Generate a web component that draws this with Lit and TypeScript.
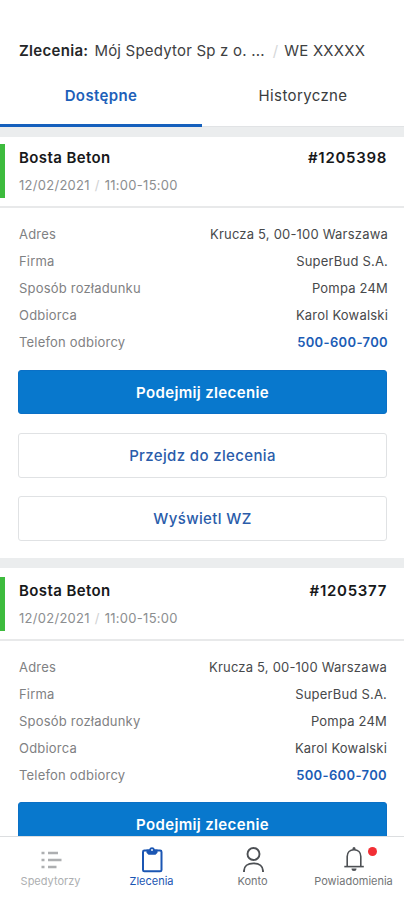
import { LitElement, html, css, svg } from "lit";
import { customElement, property } from "lit/decorators.js";

interface Order {
  company: string;
  code: string;
  rows: [string, string][];
  phone: string;
  secondary: string[];
}

const orders: Order[] = [
  {
    company: "Bosta Beton",
    code: "#1205398",
    rows: [
      ["Adres", "Krucza 5, 00-100 Warszawa"],
      ["Firma", "SuperBud S.A."],
      ["Sposób rozładunku", "Pompa 24M"],
      ["Odbiorca", "Karol Kowalski"],
    ],
    phone: "500-600-700",
    secondary: ["Przejdz do zlecenia", "Wyświetl WZ"],
  },
  {
    company: "Bosta Beton",
    code: "#1205377",
    rows: [
      ["Adres", "Krucza 5, 00-100 Warszawa"],
      ["Firma", "SuperBud S.A."],
      ["Sposób rozładunky", "Pompa 24M"],
      ["Odbiorca", "Karol Kowalski"],
    ],
    phone: "500-600-700",
    secondary: [],
  },
];

@customElement("order-card")
export class OrderCard extends LitElement {
  @property({ attribute: false }) order!: Order;

  static styles = css`
    :host { display: block; background: #fff; }
    .head {
      display: flex;
      justify-content: space-between;
      height: 54px;
      padding: 0 17px 0 14px;
      border-left: 5px solid #3dbb3d;
      box-sizing: border-box;
      margin-bottom: 8px;
    }
    .company, .code { font-size: 15px; line-height: 20px; font-weight: 600; color: #17181a; margin-top: 4px; letter-spacing: 0.4px; }
    .code { letter-spacing: 0.7px; }
    .date { font-size: 13px; line-height: 18px; margin-top: 8px; color: #8c8e90; letter-spacing: 0.28px; }
    .slash { color: #cfd1d3; margin: 0 1px; }
    .details { border-top: 2px solid #e8e9ea; padding: 13px var(--value-inset, 16px) 0 19px; }
    .row { display: flex; justify-content: space-between; height: 27px; line-height: 27px; font-size: 13px; letter-spacing: 0.2px; }
    .label { color: #7f8183; }
    .value { color: #47494b; }
    .phone { color: #1b5cb5; font-weight: 600; letter-spacing: 0.35px; }
    .actions { display: flex; flex-direction: column; gap: 18px; padding: var(--actions-top, 14px) 17px 17px 18px; }
    .btn {
      height: 45px;
      box-sizing: border-box;
      border-radius: 3px;
      border: 1px solid #e0e2e4;
      background: #fff;
      color: #2a5caa;
      font: 500 15px/43px Inter, sans-serif;
      letter-spacing: 0.36px;
      padding: 0;
      text-align: center;
    }
    .primary { height: 44px; margin-bottom: 1px; background: #0878cd; border-color: #0a70c6; color: #fff; font-weight: 600; letter-spacing: 0.35px; }
  `;

  render() {
    const o = this.order;
    return html`
      <div class="head">
        <div>
          <div class="company">${o.company}</div>
          <div class="date">12/02/2021 <span class="slash">/</span> 11:00-15:00</div>
        </div>
        <div class="code">${o.code}</div>
      </div>
      <div class="details">
        ${o.rows.map(([l, v]) => html`<div class="row"><span class="label">${l}</span><span class="value">${v}</span></div>`)}
        <div class="row"><span class="label">Telefon odbiorcy</span><span class="phone">${o.phone}</span></div>
      </div>
      <div class="actions">
        <button class="btn primary">Podejmij zlecenie</button>
        ${o.secondary.map((s) => html`<button class="btn">${s}</button>`)}
      </div>
    `;
  }
}

const listIcon = svg`<g fill="none" stroke="currentColor" stroke-width="2.600">
  <path d="M5.500 7h3M5.500 14h3M5.500 21h3"/><path d="M12 7h10M12 14h13.500M12 21h8.500"/></g>`;
const clipboardIcon = svg`<rect x="6" y="4.500" width="18.500" height="20.800" rx="1.400" fill="none" stroke="currentColor" stroke-width="2"/>
  <path d="M9.500 3.500h2.600a3 3 0 0 1 5.800 0h2.600v3.300l-2 2h-7l-2-2z" fill="currentColor"/><circle cx="15" cy="4" r="0.900" fill="#fff"/>`;
const userIcon = svg`<g fill="none" stroke="currentColor" stroke-width="1.900">
  <circle cx="15.500" cy="8" r="6"/><path d="M6 26v-1.200c0-4.600 3.600-7.400 9.500-7.400s9.500 2.800 9.500 7.400V26"/></g>`;
const bellIcon = svg`<g fill="none" stroke="currentColor" stroke-width="1.600">
  <path d="M8.200 20.500V10.500C8.200 6.200 11 3.700 15 3.700s6.800 2.500 6.800 6.800v10"/><path d="M5.300 20.600h19.500"/></g>
  <path d="M13.500 4V2.600a1.500 1.500 0 0 1 3 0V4zM12.500 22.500h5a2.500 2.500 0 0 1-5 0z" fill="currentColor"/>`;

@customElement("app-root")
export class AppRoot extends LitElement {
  static styles = css`
    :host {
      display: flex;
      flex-direction: column;
      height: 900px;
      overflow: hidden;
      background: #fff;
      font-family: Inter, sans-serif;
    }
    .title { display: flex; align-items: center; height: 20px; margin: 40px 0 0 19px; font-size: 15px; color: #3e4042; white-space: pre; letter-spacing: 0.2px; }
    .title b { font-weight: 600; color: #242628; margin-right: 6px; letter-spacing: 0.3px; }
    .title .sep { color: #d5d7d9; margin: 0 6px 0 8px; }
    .tabs { display: flex; height: 67px; flex: none; }
    .tab { flex: 1; text-align: center; font-size: 15px; line-height: 71px; color: #3a3c3e; box-sizing: border-box; letter-spacing: 0.38px; border-bottom: 1px solid #e1e3e5; }
    .active { color: #1d5fb9; font-weight: 600; border-bottom: 3px solid #1560bd; }
    .content { flex: 1; min-height: 0; overflow: hidden; background: #ebedee; padding-top: 10px; }
    .first { padding-top: 7px; }
    .next { margin-top: 10px; padding-top: 9px; --value-inset: 17px; --actions-top: 13px; }
    .nav { display: flex; flex: none; height: 64px; box-sizing: border-box; border-top: 1px solid #dcdee0; background: #fff; }
    .item { position: relative; flex: 1; display: flex; flex-direction: column; align-items: center; padding-top: 9px; font-size: 11px; line-height: 14px; color: #737577; white-space: nowrap; }
    .item svg { width: 30px; height: 28px; color: #4d5054; }
    .muted, .muted svg { color: #adafb1; }
    .current, .current svg { color: #1b56b3; }
    .dot { position: absolute; left: 65px; top: 10px; width: 9px; height: 9px; border-radius: 50%; background: #f22f35; }
  `;

  render() {
    return html`
      <div class="title"><b>Zlecenia:</b>Mój Spedytor Sp z o. ...<span class="sep">/</span>WE XXXXX</div>
      <div class="tabs"><div class="tab active">Dostępne</div><div class="tab">Historyczne</div></div>
      <div class="content">
        <order-card class="first" .order=${orders[0]}></order-card>
        <order-card class="next" .order=${orders[1]}></order-card>
      </div>
      <div class="nav">
        <div class="item muted"><svg viewBox="0 0 30 28">${listIcon}</svg>Spedytorzy</div>
        <div class="item current"><svg viewBox="0 0 30 28">${clipboardIcon}</svg>Zlecenia</div>
        <div class="item"><svg viewBox="0 0 30 28">${userIcon}</svg>Konto</div>
        <div class="item"><svg viewBox="0 0 30 28">${bellIcon}</svg>Powiadomienia<span class="dot"></span></div>
      </div>
    `;
  }
}
